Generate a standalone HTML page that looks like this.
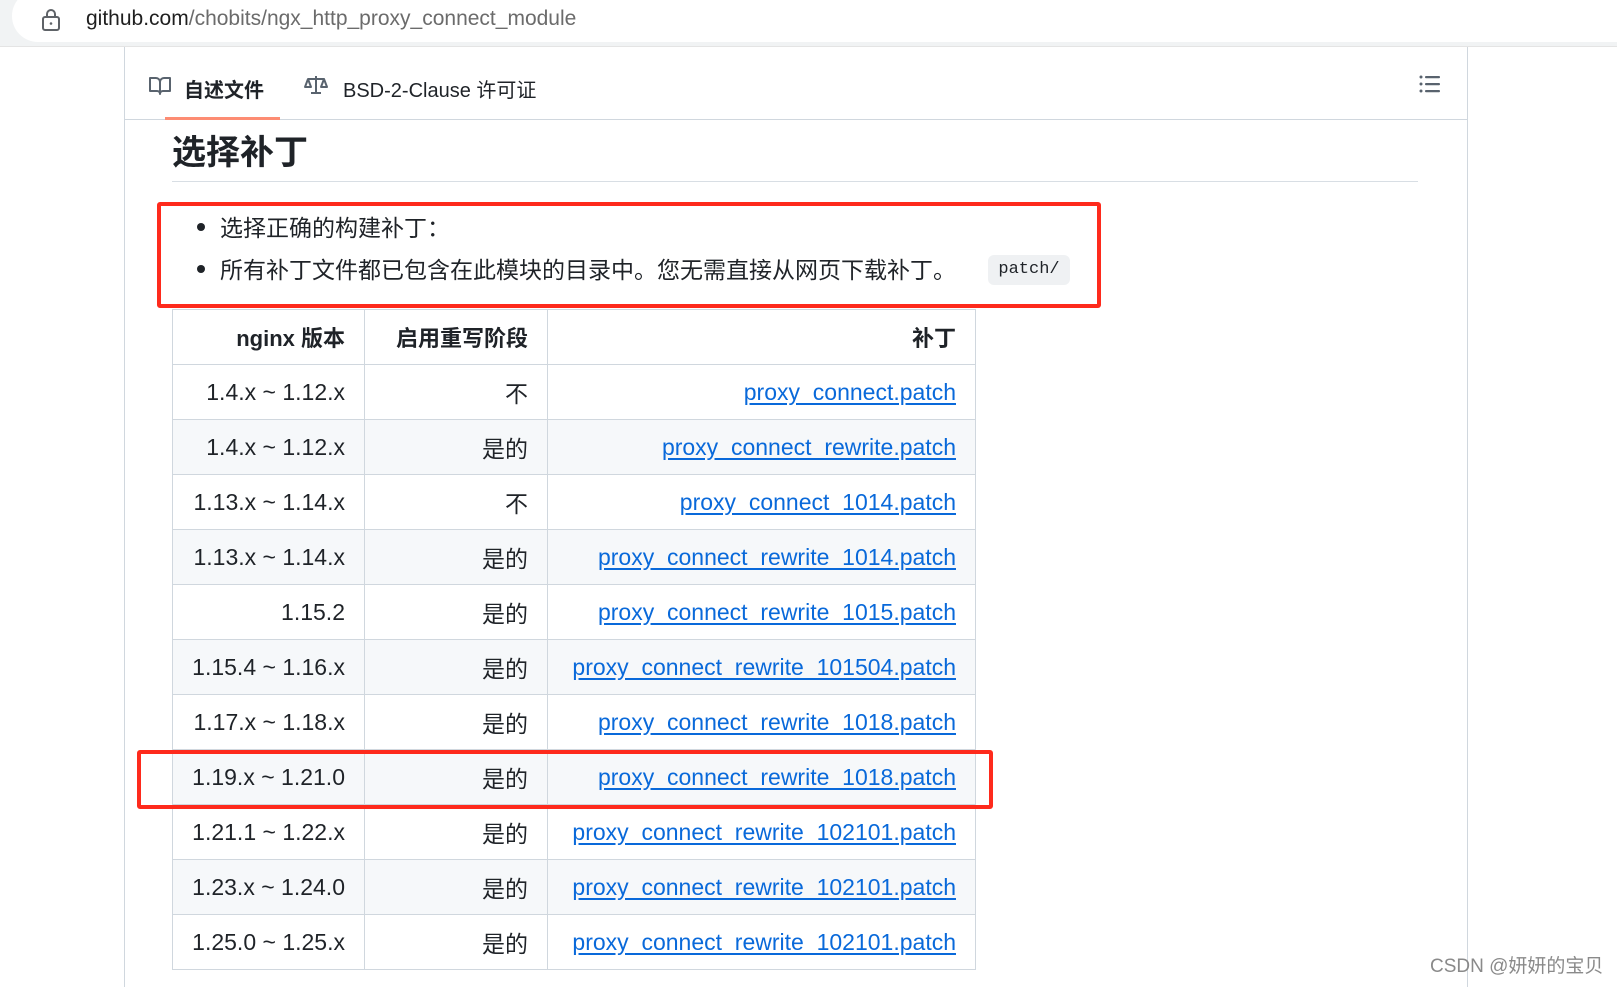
<!DOCTYPE html>
<html><head><meta charset="utf-8"><style>
*{margin:0;padding:0;box-sizing:border-box}
body{width:1617px;height:982px;overflow:hidden;background:#fff;font-family:"Liberation Sans","Noto Sans CJK SC",sans-serif;color:#1f2328;position:relative}
.a{position:absolute}
.top{left:0;top:0;width:1617px;height:47px;background:#f1f3f4;border-bottom:1px solid #e4e4e4}
.pill{left:12px;top:-10px;width:1640px;height:52px;background:#fff;border-radius:26px}
.url{left:86px;top:7px;font-size:21px;color:#1f1f1f;white-space:nowrap}
.url span{color:#6b6b6b}
.panel{left:124px;top:47px;width:1344px;height:940px;border-left:1px solid #d0d7de;border-right:1px solid #d0d7de}
.tabline{left:124px;top:119px;width:1344px;height:1px;background:#d0d7de}
.tab{font-size:20px;white-space:nowrap}
.h{left:172px;top:125px;font-size:34px;font-weight:bold}
.hl{left:172px;top:181px;width:1246px;height:1px;background:#d8dee4}
.li{font-size:23px;white-space:nowrap}
.dot{width:8px;height:8px;border-radius:50%;background:#1f2328}
.code{left:988px;top:255px;width:82px;height:30px;background:#eff1f3;border-radius:6px;font-family:"Liberation Mono",monospace;font-size:17px;line-height:30px;text-align:center}
.red{border:4px solid #fe2a1c;border-radius:3px}
table{position:absolute;left:172px;top:309px;border-collapse:collapse;font-size:23px}
td,th{border:1px solid #d0d7de;height:55px;text-align:right;padding:0 19px;white-space:nowrap}
th{font-weight:bold;font-size:22px}
tr:nth-child(odd) td{background:#f6f8fa}
tr:first-child th{background:#fff}
a{color:#0969da;text-decoration:underline;text-underline-offset:3px}
.wm{left:1430px;top:951px;font-size:19px;color:#8a8a8a;white-space:nowrap}
</style></head><body>
<div class="a top"></div>
<div class="a pill"></div>
<svg class="a" style="left:41px;top:8px" width="20" height="24" viewBox="0 0 20 24"><rect x="2" y="9" width="16" height="13" rx="2" fill="none" stroke="#5f6368" stroke-width="2"/><path d="M6 9V6a4 4 0 0 1 8 0v3" fill="none" stroke="#5f6368" stroke-width="2"/><circle cx="10" cy="15.5" r="1.3" fill="#5f6368"/></svg>
<div class="a url">github.com<span>/chobits/ngx_http_proxy_connect_module</span></div>
<div class="a panel"></div>
<div class="a tabline"></div>
<div class="a" style="left:165px;top:117px;width:115px;height:3px;background:#fd8c73"></div>
<svg class="a" style="left:148px;top:76px" width="24" height="20" viewBox="0 0 24 20"><path d="M2 2h6a4 4 0 0 1 4 4v12a3 3 0 0 0-3-3H2zM22 2h-6a4 4 0 0 0-4 4v12a3 3 0 0 1 3-3h7z" fill="none" stroke="#59636e" stroke-width="2" stroke-linejoin="round"/></svg>
<div class="a tab" style="left:184px;top:74px;font-weight:bold">自述文件</div>
<svg class="a" style="left:303px;top:74px" width="26" height="22" viewBox="0 0 26 22"><path d="M13 2v17M5 5h16M8 19h10M5 5l-3 8h6zM21 5l-3 8h6z" fill="none" stroke="#59636e" stroke-width="2" stroke-linejoin="round"/></svg>
<div class="a tab" style="left:343px;top:74px">BSD-2-Clause 许可证</div>
<svg class="a" style="left:1418px;top:74px" width="24" height="20" viewBox="0 0 24 20"><g fill="#59636e"><circle cx="3" cy="3" r="1.5"/><circle cx="3" cy="10" r="1.5"/><circle cx="3" cy="17" r="1.5"/><rect x="7" y="2" width="15" height="2.2" rx="1"/><rect x="7" y="9" width="15" height="2.2" rx="1"/><rect x="7" y="16" width="15" height="2.2" rx="1"/></g></svg>
<div class="a h">选择补丁</div>
<div class="a hl"></div>
<div class="a dot" style="left:197px;top:223px"></div>
<div class="a li" style="left:220px;top:209px">选择正确的构建补丁：</div>
<div class="a dot" style="left:197px;top:265px"></div>
<div class="a li" style="left:220px;top:251px">所有补丁文件都已包含在此模块的目录中。您无需直接从网页下载补丁。</div>
<div class="a code">patch/</div>
<div class="a red" style="left:157px;top:202px;width:944px;height:106px"></div>
<table>
<tr><th style="width:192px">nginx 版本</th><th style="width:183px">启用重写阶段</th><th style="width:428px">补丁</th></tr>
<tr><td>1.4.x ~ 1.12.x</td><td>不</td><td><a>proxy_connect.patch</a></td></tr>
<tr><td>1.4.x ~ 1.12.x</td><td>是的</td><td><a>proxy_connect_rewrite.patch</a></td></tr>
<tr><td>1.13.x ~ 1.14.x</td><td>不</td><td><a>proxy_connect_1014.patch</a></td></tr>
<tr><td>1.13.x ~ 1.14.x</td><td>是的</td><td><a>proxy_connect_rewrite_1014.patch</a></td></tr>
<tr><td>1.15.2</td><td>是的</td><td><a>proxy_connect_rewrite_1015.patch</a></td></tr>
<tr><td>1.15.4 ~ 1.16.x</td><td>是的</td><td><a>proxy_connect_rewrite_101504.patch</a></td></tr>
<tr><td>1.17.x ~ 1.18.x</td><td>是的</td><td><a>proxy_connect_rewrite_1018.patch</a></td></tr>
<tr><td>1.19.x ~ 1.21.0</td><td>是的</td><td><a>proxy_connect_rewrite_1018.patch</a></td></tr>
<tr><td>1.21.1 ~ 1.22.x</td><td>是的</td><td><a>proxy_connect_rewrite_102101.patch</a></td></tr>
<tr><td>1.23.x ~ 1.24.0</td><td>是的</td><td><a>proxy_connect_rewrite_102101.patch</a></td></tr>
<tr><td>1.25.0 ~ 1.25.x</td><td>是的</td><td><a>proxy_connect_rewrite_102101.patch</a></td></tr>
</table>
<div class="a red" style="left:137px;top:750px;width:856px;height:59px"></div>
<div class="a wm">CSDN @妍妍的宝贝</div>
</body></html>
